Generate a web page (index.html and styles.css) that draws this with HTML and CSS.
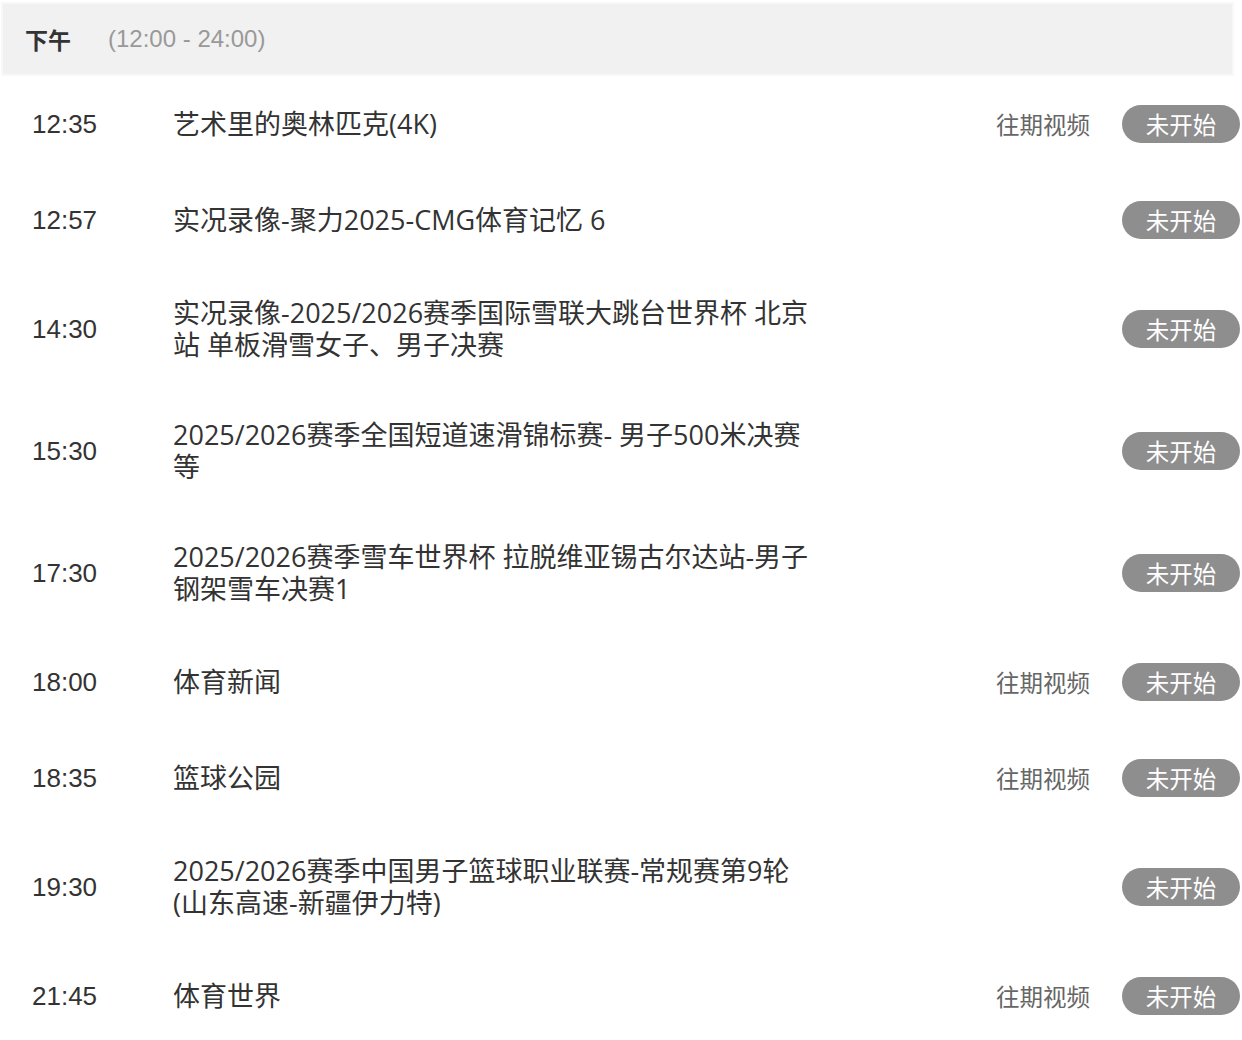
FILE: index.html
```html
<!DOCTYPE html>
<html lang="zh-CN">
<head>
    <meta charset="UTF-8">
    <meta name="viewport" content="width=device-width, initial-scale=1.0">
    <title>节目单 - 下午</title>
    <link rel="stylesheet" href="styles.css">
</head>
<body>
    <div class="schedule">
        <!-- Period header -->
        <div class="period-head">
            <span class="period-name">下午</span>
            <span class="period-range">(12:00 - 24:00)</span>
        </div>

        <div class="program-list">
            <div class="program-row">
                <span class="program-time">12:35</span>
                <span class="program-title">艺术里的奥林匹克(4K)</span>
                <div class="program-actions">
                    <span class="replay-link">往期视频</span>
                    <span class="status-badge">未开始</span>
                </div>
            </div>

            <div class="program-row">
                <span class="program-time">12:57</span>
                <span class="program-title">实况录像-聚力2025-CMG体育记忆 6</span>
                <div class="program-actions">
                    <span class="status-badge">未开始</span>
                </div>
            </div>

            <div class="program-row">
                <span class="program-time">14:30</span>
                <span class="program-title">实况录像-2025/2026赛季国际雪联大跳台世界杯 北京站 单板滑雪女子、男子决赛</span>
                <div class="program-actions">
                    <span class="status-badge">未开始</span>
                </div>
            </div>

            <div class="program-row">
                <span class="program-time">15:30</span>
                <span class="program-title">2025/2026赛季全国短道速滑锦标赛- 男子500米决赛等</span>
                <div class="program-actions">
                    <span class="status-badge">未开始</span>
                </div>
            </div>

            <div class="program-row">
                <span class="program-time">17:30</span>
                <span class="program-title">2025/2026赛季雪车世界杯 拉脱维亚锡古尔达站-男子钢架雪车决赛1</span>
                <div class="program-actions">
                    <span class="status-badge">未开始</span>
                </div>
            </div>

            <div class="program-row">
                <span class="program-time">18:00</span>
                <span class="program-title">体育新闻</span>
                <div class="program-actions">
                    <span class="replay-link">往期视频</span>
                    <span class="status-badge">未开始</span>
                </div>
            </div>

            <div class="program-row">
                <span class="program-time">18:35</span>
                <span class="program-title">篮球公园</span>
                <div class="program-actions">
                    <span class="replay-link">往期视频</span>
                    <span class="status-badge">未开始</span>
                </div>
            </div>

            <div class="program-row">
                <span class="program-time">19:30</span>
                <span class="program-title">2025/2026赛季中国男子篮球职业联赛-常规赛第9轮(山东高速-新疆伊力特)</span>
                <div class="program-actions">
                    <span class="status-badge">未开始</span>
                </div>
            </div>

            <div class="program-row">
                <span class="program-time">21:45</span>
                <span class="program-title">体育世界</span>
                <div class="program-actions">
                    <span class="replay-link">往期视频</span>
                    <span class="status-badge">未开始</span>
                </div>
            </div>
        </div>
    </div>
</body>
</html>
```

FILE: styles.css
```css
body {
    margin: 0;
    background-color: #fff;
    font-family: "Liberation Sans", "Noto Sans CJK SC", sans-serif;
    color: #333;
}

/* Period header band */
.period-head {
    display: flex;
    align-items: center;
    height: 70px;
    margin: 4px 10px 2px 3px;
    padding-left: 22px;
    background-color: #f1f1f1;
    box-shadow: 0 0 0 2px #f8f8f8;
}

.period-name {
    font-family: "Noto Sans CJK SC", sans-serif;
    font-size: 23px;
    font-weight: bold;
    color: #333;
}

.period-range {
    margin-left: 37px;
    font-size: 24px;
    color: #999;
}

/* Program rows */
.program-row {
    display: flex;
    align-items: center;
    padding: 29px 2px 29px 32px;
}

.program-time {
    width: 141px;
    flex-shrink: 0;
    font-size: 26px;
    line-height: 32px;
    color: #333;
}

.program-title {
    width: 644px;
    font-family: "Open Sans", "Noto Sans CJK SC", sans-serif;
    font-size: 27px;
    line-height: 32px;
    color: #333;
}

.program-actions {
    display: flex;
    align-items: center;
    gap: 32px;
    margin-left: auto;
}

.replay-link {
    font-family: "Noto Sans CJK SC", sans-serif;
    font-size: 23.5px;
    color: #666;
    cursor: pointer;
}

.status-badge {
    display: inline-flex;
    align-items: center;
    justify-content: center;
    width: 118px;
    height: 38px;
    border-radius: 19px;
    background-color: #8e8e8e;
    color: #fff;
    font-family: "Noto Sans CJK SC", sans-serif;
    font-size: 23.5px;
}
```
